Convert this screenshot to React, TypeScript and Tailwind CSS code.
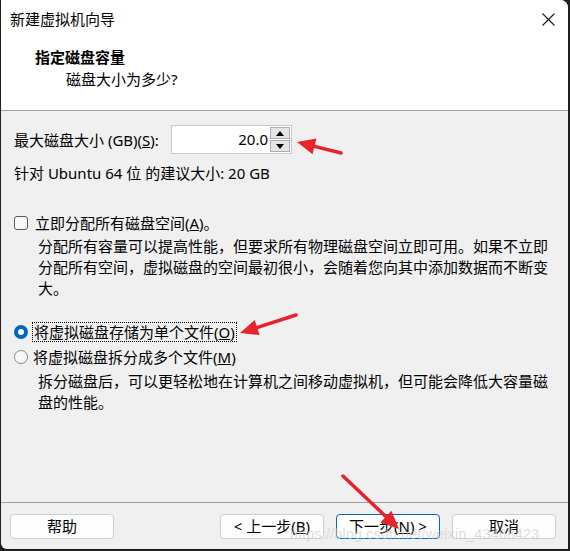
const Arrow = ({ x1, y1, x2, y2 }: { x1: number; y1: number; x2: number; y2: number }) => {
   const dx = x2 - x1;
   const dy = y2 - y1;
   const len = Math.sqrt(dx * dx + dy * dy);
   const ux = dx / len;
   const uy = dy / len;
   const bx = x2 - ux * 18;
   const by = y2 - uy * 18;
   const nx = -uy;
   const ny = ux;
   const pts = `${x2},${y2} ${bx + nx * 8},${by + ny * 8} ${bx - nx * 8},${by - ny * 8}`;
   return (
      <g>
         <line x1={x1} y1={y1} x2={bx + ux * 2} y2={by + uy * 2} stroke="#e8232b" strokeWidth={3.5} strokeLinecap="round" />
         <polygon points={pts} fill="#e8232b" />
      </g>
   );
};

const Btn = ({ children, primary }: { children: React.ReactNode; primary?: boolean }) => (
   <div
      className={
         primary
            ? "flex h-[25px] w-[104px] items-center justify-center rounded-[4px] border border-[#0067c0] bg-[#fdfdfd]"
            : "flex h-[25px] w-[104px] items-center justify-center rounded-[4px] border border-[#d0d0d0] bg-[#fdfdfd]"
      }
   >
      {children}
   </div>
);

const App = () => {
   return (
      <div className="relative h-[551px] w-[570px] bg-[#1f1f1f] pb-[2px] pl-px pr-[2px] font-['Noto_Sans','Noto_Sans_CJK_SC',sans-serif] text-[15px] text-black">
         <div className="flex h-full flex-col overflow-hidden rounded-tr-[8px] rounded-bl-[6px] bg-[#f0f0f0]">
            {/* header */}
            <div className="h-[111px] border-b border-[#a0a0a0] bg-white">
               <div className="flex h-[38px] items-center justify-between pl-[9px] pr-[13px]">
                  <span className="leading-[20px]">新建虚拟机向导</span>
                  <svg width="13" height="13" viewBox="0 0 13 13">
                     <path d="M0.5 0.5 L12.5 12.5 M12.5 0.5 L0.5 12.5" stroke="#1a1a1a" strokeWidth="1.1" />
                  </svg>
               </div>
               <div className="mt-[8px] pl-[34px] font-bold leading-[22px]">指定磁盘容量</div>
               <div className="pl-[65px] leading-[22px]">磁盘大小为多少?</div>
            </div>

            {/* body */}
            <div className="flex-1 px-[13px] pt-[14px]">
               <div className="flex h-[29px] items-center">
                  <span className="w-[157px] leading-[20px]">
                     最大磁盘大小 (GB)(<u>S</u>):
                  </span>
                  <div className="flex h-[29px] w-[121px] border border-[#c8c8c8] bg-white">
                     <div className="flex-1 pr-[2px] text-right leading-[27px]">20.0</div>
                     <div className="flex w-[21px] flex-col gap-px py-px pr-px">
                        <div className="flex flex-1 items-center justify-center border border-[#adadad] bg-[#e5e5e5]">
                           <svg width="8" height="5" viewBox="0 0 8 5">
                              <polygon points="4,0 8,5 0,5" fill="#000" />
                           </svg>
                        </div>
                        <div className="flex flex-1 items-center justify-center border border-[#adadad] bg-[#e5e5e5]">
                           <svg width="8" height="5" viewBox="0 0 8 5">
                              <polygon points="0,0 8,0 4,5" fill="#000" />
                           </svg>
                        </div>
                     </div>
                  </div>
               </div>
               <div className="mt-[9px] leading-[20px]">针对 Ubuntu 64 位 的建议大小: 20 GB</div>

               <div className="mt-[30px] flex items-center gap-[7px] leading-[20px]">
                  <span className="h-[14px] w-[14px] rounded-[3px] border border-[#5b5b5b] bg-[#f7f7f7]" />
                  <span>
                     立即分配所有磁盘空间(<u>A</u>)。
                  </span>
               </div>
               <p className="mt-[3px] pl-[24px] pr-[6px] leading-[21px]">
                  分配所有容量可以提高性能，但要求所有物理磁盘空间立即可用。如果不立即分配所有空间，虚拟磁盘的空间最初很小，会随着您向其中添加数据而不断变大。
               </p>

               <div className="mt-[23px] flex items-center gap-[4px]">
                  <span className="h-[14px] w-[14px] rounded-full border-[4px] border-[#0067c0] bg-white" />
                  <span className="border border-dotted border-black px-px leading-[18px]">
                     将虚拟磁盘存储为单个文件(<u>O</u>)
                  </span>
               </div>
               <div className="mt-[5px] flex items-center gap-[5px] leading-[20px]">
                  <span className="h-[14px] w-[14px] rounded-full border border-[#8a8a8a] bg-[#f7f7f7]" />
                  <span>
                     将虚拟磁盘拆分成多个文件(<u>M</u>)
                  </span>
               </div>
               <p className="mt-[4px] pl-[24px] pr-[6px] leading-[21px]">
                  拆分磁盘后，可以更轻松地在计算机之间移动虚拟机，但可能会降低大容量磁盘的性能。
               </p>
            </div>

            {/* footer */}
            <div className="flex h-[47px] border-t border-[#a0a0a0] pl-[9px] pt-[11px]">
               <Btn>帮助</Btn>
               <div className="ml-[106px] flex gap-[12px]">
                  <Btn>
                     &lt; 上一步(<u>B</u>)
                  </Btn>
                  <Btn primary>
                     下一步(<u>N</u>) &gt;
                  </Btn>
                  <Btn>取消</Btn>
               </div>
            </div>
         </div>

         <div className="pointer-events-none absolute left-[290px] top-[524px] font-['Liberation_Sans',sans-serif] text-[14px] tracking-[0.3px] text-[#c8c8c8]/60">
            https://blog.csdn.net/weixin_43468423
         </div>

         <svg className="pointer-events-none absolute left-0 top-0" width="570" height="551">
            <Arrow x1={341} y1={153} x2={297} y2={142} />
            <Arrow x1={296} y1={315} x2={240} y2={333} />
            <Arrow x1={343} y1={476} x2={399} y2={529} />
         </svg>
      </div>
   );
};

export default App;
